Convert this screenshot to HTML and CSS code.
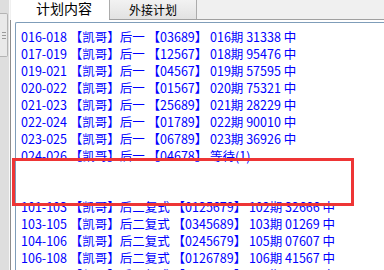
FILE: index.html
```html
<!DOCTYPE html>
<html lang="zh-CN">
<head>
  <meta charset="UTF-8">
  <title>计划内容</title>
  <link rel="stylesheet" href="styles.css">
</head>
<body>
  <div class="window">
    <div class="sidebar">
      <div class="thumb"><span></span><span></span><span></span></div>
    </div>
    <div class="main">
      <div class="tabs">
        <div class="tab active">计划内容</div>
        <div class="tab">外接计划</div>
      </div>
      <div class="panel">
        <div class="list">
          <div class="row">016-018 【凯哥】后一 【03689】 016期 31338 中</div>
          <div class="row">017-019 【凯哥】后一 【12567】 018期 95476 中</div>
          <div class="row">019-021 【凯哥】后一 【04567】 019期 57595 中</div>
          <div class="row">020-022 【凯哥】后一 【01567】 020期 75321 中</div>
          <div class="row">021-023 【凯哥】后一 【25689】 021期 28229 中</div>
          <div class="row">022-024 【凯哥】后一 【01789】 022期 90010 中</div>
          <div class="row">023-025 【凯哥】后一 【06789】 023期 36926 中</div>
          <div class="row">024-026 【凯哥】后一 【04678】 等待(1)</div>
          <div class="row"></div>
          <div class="row"></div>
          <div class="row">101-103 【凯哥】后二复式 【0125679】 102期 32666 中</div>
          <div class="row">103-105 【凯哥】后二复式 【0345689】 103期 01269 中</div>
          <div class="row">104-106 【凯哥】后二复式 【0245679】 105期 07607 中</div>
          <div class="row">106-108 【凯哥】后二复式 【0126789】 106期 41567 中</div>
          <div class="row">107-109 【凯哥】后二复式 【0234679】 107期 58214 中</div>
        </div>
      </div>
    </div>
  </div>
  <div class="mark"></div>
</body>
</html>
```

FILE: styles.css
```css
body {
  margin: 0;
  width: 384px;
  height: 270px;
  overflow: hidden;
  background: #f0f0f0;
  font-family: "Noto Sans CJK SC", "Noto Sans", sans-serif;
}
.window {
  display: flex;
  height: 270px;
}
.sidebar {
  width: 9px;
  background: #dedede;
  border-right: 1px solid #f8f8f8;
  padding-top: 13px;
}
.thumb {
  height: 42px;
  width: 7px;
  background: #e9e9e9;
  border: 1px solid #b4b4b4;
  border-left: none;
  border-radius: 0 2px 2px 0;
  display: flex;
  flex-direction: column;
  justify-content: center;
  align-items: center;
  gap: 2px;
}
.thumb span {
  width: 4px;
  height: 1px;
  background: #9a9a9a;
}
.main {
  flex: 1;
  display: flex;
  flex-direction: column;
}
.tabs {
  display: flex;
  height: 19px;
  border-bottom: 1px solid #a0a0a0;
  margin-left: 1px;
}
.tab {
  width: 88px;
  height: 19px;
  box-sizing: border-box;
  border: 1px solid #acacac;
  border-top: none;
  border-bottom: none;
  background: linear-gradient(#f2f2f2, #e2e2e2);
  font-size: 12px;
  line-height: 20px;
  text-align: center;
  color: #000;
}
.tab.active {
  width: 98px;
  height: 20px;
  background: #fff;
  border: none;
  margin-bottom: -1px;
  font-size: 14px;
  line-height: 16px;
  text-indent: 8px;
}
.panel {
  flex: 1;
  background: #fff;
  border-left: 1px solid #8d8d8d;
  padding: 2px 0 0 4px;
}
.list {
  height: 100%;
  box-sizing: border-box;
  border: 1px solid #7f9db9;
  border-right: none;
  border-bottom: none;
  border-radius: 2px 0 0 0;
  padding: 5px 0 0 5px;
  color: #0000ff;
  font-size: 12.5px;
  line-height: 17px;
}
.row {
  height: 17px;
  white-space: pre;
}
.mark {
  position: absolute;
  left: 12px;
  top: 158px;
  width: 342px;
  height: 48px;
  box-sizing: border-box;
  border: 3px solid #ee3535;
}
```
